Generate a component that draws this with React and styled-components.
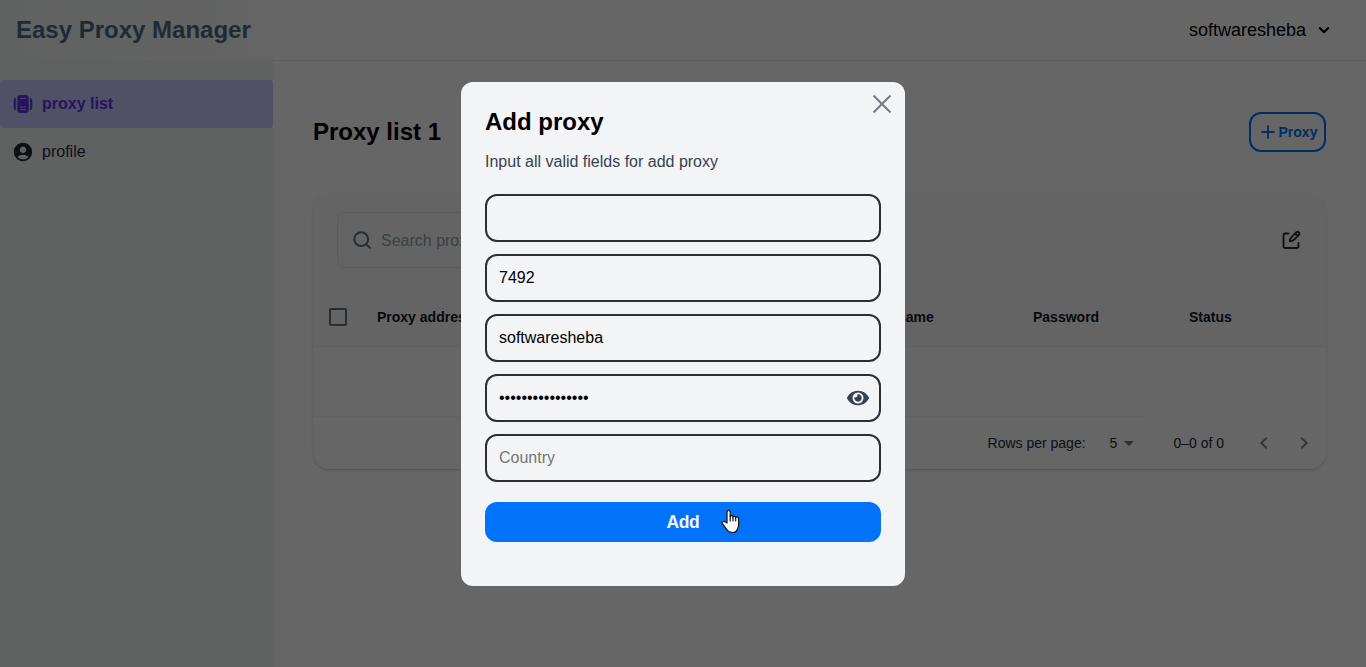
import React from "react";
import styled, { createGlobalStyle } from "styled-components";
import { FaEye } from "react-icons/fa";
import { MdAccountCircle, MdArrowDropDown, MdKeyboardArrowLeft, MdKeyboardArrowRight } from "react-icons/md";

const Global = createGlobalStyle`
  * { box-sizing: border-box; }
  body { margin: 0; background: #fff; overflow: hidden; font-family: "Liberation Sans", Arial, sans-serif; color: #111827; }
  h1, h2, p { margin: 0; }
  input, button { font: inherit; }
`;

const Page = styled.div`
  height: 100vh;
  display: flex;
  flex-direction: column;
`;
const Header = styled.header`
  height: 61px;
  flex: none;
  display: flex;
  align-items: center;
  justify-content: space-between;
  padding: 0 35px 0 16px;
  border-bottom: 1px solid #f0f1f3;
  background: linear-gradient(90deg, #f1f6f3 0, #f5f8f6 200px, #fff 300px);
`;
const Brand = styled.h1`
  font-size: 24px;
  line-height: 32px;
  color: #4c6b8a;
`;
const User = styled.div`
  display: flex;
  align-items: center;
  gap: 11px;
  font-size: 18px;
  color: #000;
`;
const Body = styled.div`
  flex: 1;
  display: flex;
  min-height: 0;
`;
const Sidebar = styled.nav`
  width: 273px;
  flex: none;
  padding-top: 19px;
  background: #f1f6f3;
`;
const NavItem = styled.a`
  display: flex;
  align-items: center;
  gap: 8px;
  height: 48px;
  padding-left: 12px;
  border-radius: 4px;
  font-size: 16px;
  line-height: 24px;
  font-weight: ${(p) => (p.$active ? 700 : 400)};
  color: ${(p) => (p.$active ? "#5b35e6" : "#1f2937")};
  background: ${(p) => (p.$active ? "#c7c9fe" : "transparent")};
  svg { width: 22px; height: 22px; margin-top: ${(p) => (p.$active ? "-1px" : "-1px")}; }
`;
const Main = styled.main`
  flex: 1;
  padding: 51px 40px 0;
`;
const TitleRow = styled.div`
  display: flex;
  align-items: center;
  justify-content: space-between;
  height: 40px;
  margin-bottom: 42px;
`;
const Title = styled.h2`
  font-size: 24px;
  line-height: 32px;
  color: #000;
`;
const ProxyButton = styled.button`
  display: flex;
  align-items: center;
  justify-content: center;
  gap: 4px;
  width: 77px;
  height: 40px;
  padding: 0 0 0 3px;
  border: 2px solid #0072fa;
  border-radius: 12px;
  background: transparent;
  color: #0072fa;
  font-size: 14px;
  font-weight: 700;
`;
const Card = styled.section`
  height: 275px;
  border-radius: 16px;
  overflow: hidden;
  background: #fff;
  box-shadow: 0 1px 3px rgba(0, 0, 0, 0.12), 0 1px 1px rgba(0, 0, 0, 0.08);
`;
const CardTop = styled.div`
  height: 153px;
  background: #fbfbfb;
  border-bottom: 1px solid #f2f2f3;
`;
const Tools = styled.div`
  display: flex;
  align-items: center;
  justify-content: space-between;
  height: 92px;
  padding: 0 24px;
`;
const Search = styled.div`
  display: flex;
  align-items: center;
  gap: 8px;
  width: 240px;
  height: 56px;
  padding: 1px 0 0 15px;
  border: 1px solid #e3e6e9;
  border-radius: 8px;
  font-size: 16px;
  color: #919eab;
`;
const EditIcon = styled.svg`
  width: 20px;
  height: 20px;
  margin-right: 1px;
`;
const Columns = styled.div`
  display: grid;
  grid-template-columns: 64px 489px 167px 156px 1fr;
  align-items: center;
  height: 60px;
  padding-top: 2px;
  font-size: 14px;
  font-weight: 700;
  line-height: 24px;
  color: #111827;
`;
const Check = styled.span`
  width: 18px;
  height: 18px;
  margin-left: 16px;
  border: 2px solid #637381;
  border-radius: 2px;
`;
const EmptyRow = styled.div`
  width: 835px;
  height: 70px;
  border-bottom: 1px solid #f3f4f5;
`;
const Pager = styled.div`
  display: flex;
  align-items: center;
  justify-content: flex-end;
  height: 52px;
  padding-right: 10px;
  font-size: 14px;
  color: #212b36;
`;
const PageSize = styled.span`
  display: flex;
  align-items: center;
  margin: 0 32px 0 24px;
  svg { color: #637381; }
`;
const PageArrows = styled.span`
  display: flex;
  gap: 16px;
  margin-left: 28px;
  color: #7f8994;
`;
const Backdrop = styled.div`
  position: fixed;
  inset: 0;
  display: flex;
  align-items: center;
  justify-content: center;
  background: rgba(0, 0, 0, 0.6);
`;
const Dialog = styled.div`
  position: relative;
  width: 444px;
  height: 504px;
  margin-top: 1px;
  padding: 24px;
  border-radius: 12px;
  background: #f3f4f6;
`;
const Close = styled.svg`
  position: absolute;
  top: 12px;
  right: 13px;
  width: 20px;
  height: 20px;
`;
const DialogTitle = styled.h2`
  font-size: 24px;
  line-height: 32px;
  color: #000;
`;
const Hint = styled.p`
  margin: 12px 0 20px;
  font-size: 16px;
  line-height: 24px;
  color: #374151;
`;
const Fields = styled.div`
  display: flex;
  flex-direction: column;
  gap: 12px;
`;
const Field = styled.label`
  display: flex;
  align-items: center;
  height: 48px;
  padding: 0 10px 0 12px;
  border: 2px solid #2d2e32;
  border-radius: 12px;
  svg { width: 22px; height: 20px; color: #374151; flex: none; }
`;
const Input = styled.input`
  flex: 1;
  min-width: 0;
  height: 24px;
  padding: 0;
  border: 0;
  outline: 0;
  background: transparent;
  font-size: 16px;
  color: #000;
  &::placeholder { color: #757575; opacity: 1; }
`;
const AddButton = styled.button`
  position: relative;
  display: block;
  width: 100%;
  height: 40px;
  margin-top: 20px;
  border: 0;
  border-radius: 12px;
  background: #0073fa;
  color: #f3f4f6;
  font-size: 17.5px;
  font-weight: 700;
  letter-spacing: -0.4px;
`;
const Pointer = styled.svg`
  position: absolute;
  left: 236px;
  top: 7px;
  width: 19px;
  height: 25px;
`;

const columns = ["Proxy address", "Username", "Password", "Status"];
const fields = [
  { id: "address", value: "" },
  { id: "port", value: "7492" },
  { id: "user", value: "softwaresheba" },
  { id: "password", value: "sheba-proxy-7492", type: "password" },
  { id: "country", value: "", placeholder: "Country" },
];

const ListIcon = () => (
  <svg viewBox="0 0 22 22" fill="none">
    <rect x="5.300" y="2" width="11.400" height="18" rx="3" fill="currentColor" />
    <path d="M3.700 5.200v11.600C2.500 16.500 2 15.700 2 14.500v-7c0-1.200.5-2 1.700-2.300ZM18.300 5.200v11.600c1.200-.3 1.700-1.100 1.700-2.300v-7c0-1.200-.5-2-1.700-2.300Z" fill="currentColor" stroke="currentColor" strokeWidth=".6" />
    <path d="M8 5.500h6M8 14h6M8 16.700h6" stroke="#c7c9fe" strokeOpacity=".7" strokeWidth="1.200" />
  </svg>
);

export default function App() {
  return (
    <>
      <Global />
      <Page>
        <Header>
          <Brand>Easy Proxy Manager</Brand>
          <User>
            softwaresheba
            <svg width="14" height="14" viewBox="0 0 14 14" fill="none">
              <path d="m2.800 5 4.200 4.200L11.200 5" stroke="#000" strokeWidth="2.100" strokeLinecap="round" strokeLinejoin="round" />
            </svg>
          </User>
        </Header>
        <Body>
          <Sidebar>
            <NavItem $active><ListIcon />proxy list</NavItem>
            <NavItem><MdAccountCircle />profile</NavItem>
          </Sidebar>
          <Main>
            <TitleRow>
              <Title>Proxy list 1</Title>
              <ProxyButton>
                <svg width="14" height="14" viewBox="0 0 14 14">
                  <path d="M7 .5v13M.5 7h13" stroke="currentColor" strokeWidth="1.900" />
                </svg>
                Proxy
              </ProxyButton>
            </TitleRow>
            <Card>
              <CardTop>
                <Tools>
                  <Search>
                    <svg width="20" height="20" viewBox="0 0 20 20" fill="none" stroke="#637381" strokeWidth="2" strokeLinecap="round">
                      <circle cx="8.200" cy="8.200" r="6.900" />
                      <path d="m13.400 13.400 3.400 3.400" />
                    </svg>
                    Search proxy
                  </Search>
                  <EditIcon viewBox="0 0 20 20" fill="none" stroke="#212b36" strokeWidth="1.900" strokeLinecap="round" strokeLinejoin="round">
                    <path d="M7.500 3.500H4A1.500 1.500 0 0 0 2.500 5v11.500A1.500 1.500 0 0 0 4 18h12a1.500 1.500 0 0 0 1.500-1.500V13" />
                    <path d="M8.800 11.300c0-2 .6-3.100 1.700-4.200l4.800-4.800a1.850 1.850 0 0 1 2.600 2.600l-4.800 4.800c-1.100 1.100-2.300 1.600-4.300 1.600ZM14.200 3.500l2.300 2.300" />
                  </EditIcon>
                </Tools>
                <Columns>
                  <Check />
                  {columns.map((c) => <span key={c}>{c}</span>)}
                </Columns>
              </CardTop>
              <EmptyRow />
              <Pager>
                Rows per page:
                <PageSize>5<MdArrowDropDown size={24} /></PageSize>
                0–0 of 0
                <PageArrows>
                  <MdKeyboardArrowLeft size={24} />
                  <MdKeyboardArrowRight size={24} />
                </PageArrows>
              </Pager>
            </Card>
          </Main>
        </Body>
      </Page>
      <Backdrop>
        <Dialog>
          <Close viewBox="0 0 20 20">
            <path d="m1.500 1.500 17 17m0-17-17 17" stroke="#737980" strokeWidth="1.900" />
          </Close>
          <DialogTitle>Add proxy</DialogTitle>
          <Hint>Input all valid fields for add proxy</Hint>
          <Fields>
            {fields.map((f) => (
              <Field key={f.id}>
                <Input type={f.type || "text"} defaultValue={f.value} placeholder={f.placeholder} />
                {f.type === "password" && <FaEye />}
              </Field>
            ))}
          </Fields>
          <AddButton>
            Add
            <Pointer viewBox="0 0 19 25">
              <path
                d="M6 14V3.200C6 .8 9.200.8 9.200 3.200V7.500c.4-1.300 2.600-1 2.800.3.600-1 2.500-.6 2.700.6.700-.8 2.900-.4 2.900 1.200V16c0 2-.8 3-1.400 4.500-.5 2-2.200 3-5 3-3 0-4.200-1-5.200-2.700L1.500 14.700C.5 13 2.500 11.500 4 12.800Z"
                fill="#fff" stroke="#111" strokeWidth="1.200" strokeLinejoin="round"
              />
              <path d="M9.200 7v5M12 7.800v4.200M14.700 8.500V12" stroke="#111" strokeWidth="1.200" strokeLinecap="round" />
            </Pointer>
          </AddButton>
        </Dialog>
      </Backdrop>
    </>
  );
}
